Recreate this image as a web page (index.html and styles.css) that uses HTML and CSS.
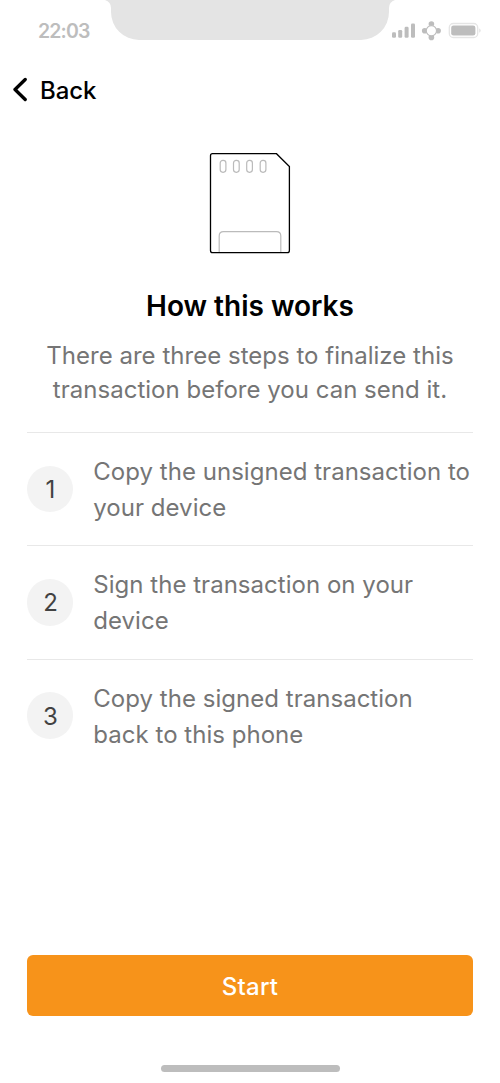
FILE: index.html
```html
<!DOCTYPE html>
<html lang="en">
<head>
<meta charset="utf-8">
<title>How this works</title>
<link rel="stylesheet" href="styles.css">
</head>
<body>
<div class="screen">
  <header class="status">
    <span class="time">22:03</span>
    <svg class="notch" width="290" height="41" viewBox="0 0 290 41"><path d="M0 0H290Q284 2 284 8V12A28 28 0 0 1 256 40H34A28 28 0 0 1 6 12V8Q6 2 0 0Z" fill="#e4e4e4"/></svg>
    <svg class="indicators" width="95" height="22" viewBox="0 0 95 22">
      <g fill="#bdbdbd"><rect x="2" y="12.300" width="4" height="5.500" rx="1.300"/><rect x="8.200" y="10" width="4" height="7.800" rx="1.300"/><rect x="14.600" y="6.800" width="4" height="11" rx="1.300"/><rect x="21" y="3.400" width="4" height="14.400" rx="1.300"/></g>
      <g fill="#bdbdbd"><circle cx="41.400" cy="4" r="2.800"/><circle cx="48.100" cy="10.700" r="2.800"/><circle cx="41.400" cy="17.400" r="2.800"/><circle cx="34.700" cy="10.700" r="2.800"/></g>
      <circle cx="41.400" cy="10.700" r="5.100" fill="#fff" stroke="#bdbdbd" stroke-width="1.100"/>
      <rect x="59.300" y="3.500" width="28.400" height="14" rx="4" fill="none" stroke="#e5e5e5" stroke-width="1.300"/><rect x="61.200" y="5.500" width="24.200" height="10" rx="2.300" fill="#bdbdbd"/><path d="M89.300 8.200Q92 10.500 89.300 12.800Z" fill="#dedede"/>
    </svg>
  </header>
  <nav class="nav"><svg width="16" height="26" viewBox="0 0 16 26"><path d="M14.200 2.500L4 12.500L14.200 22.500" fill="none" stroke="#000" stroke-width="3.300" stroke-linecap="round" stroke-linejoin="round"/></svg><span class="back">Back</span></nav>
  <main class="content">
    <svg class="card" width="82" height="102" viewBox="0 0 82 102"><path d="M3.500 1.700H67.500L80.400 14.500V98.500Q80.400 100.700 78.200 100.700H3.700Q1.500 100.700 1.500 98.500V3.700Q1.500 1.700 3.500 1.700Z" fill="#fff" stroke="#000" stroke-width="1.300"/><g fill="none" stroke="#bbb" stroke-width="1.200"><rect x="11.200" y="8.300" width="5.700" height="12" rx="2.700"/><rect x="24.500" y="8.300" width="5.700" height="12" rx="2.700"/><rect x="37.700" y="8.300" width="5.700" height="12" rx="2.700"/><rect x="51.200" y="8.300" width="5.700" height="12" rx="2.700"/><path d="M10.200 100V84Q10.200 79.700 14.500 79.700H67.500Q71.800 79.700 71.800 84V100"/></g></svg>
    <h1 class="title">How this works</h1>
    <p class="intro">There are three steps to finalize this<br>transaction before you can send it.</p>
    <ol class="steps">
      <li class="step"><span class="number">1</span><span class="label">Copy the unsigned transaction to<br>your device</span></li>
      <li class="step"><span class="number">2</span><span class="label">Sign the transaction on your<br>device</span></li>
      <li class="step"><span class="number">3</span><span class="label">Copy the signed transaction<br>back to this phone</span></li>
    </ol>
  </main>
  <footer class="footer"><button class="start">Start</button><div class="home"></div></footer>
</div>
</body>
</html>
```

FILE: styles.css
```css
* { box-sizing: border-box; }
body { margin: 0; background: #fff; font-family: Inter, sans-serif; }
.screen { width: 500px; height: 1083px; display: flex; flex-direction: column; overflow: hidden; }
.status { height: 60px; display: flex; align-items: flex-start; }
.time { width: 105px; padding: 19px 0 0 38px; font-size: 19.500px; line-height: 24px; font-weight: 600; letter-spacing: -0.850px; color: #bdbdbd; }
.notch { flex: none; }
.indicators { margin: 20px 0 0 -5px; flex: none; }
.nav { height: 60px; padding-left: 11px; display: flex; align-items: center; gap: 13px; }
.back { padding-top: 1px; font-size: 24px; line-height: 31px; font-weight: 500; letter-spacing: -0.100px; }
.content { padding: 32px 27px 0; display: flex; flex-direction: column; align-items: center; flex: 1; }
.title { margin: 35px 0 0; font-size: 28px; line-height: 34px; font-weight: 600; white-space: nowrap; }
.intro { margin: 16px 0 0; font-size: 24px; line-height: 33.500px; letter-spacing: 0.020px; color: #757575; text-align: center; white-space: nowrap; }
.steps { list-style: none; margin: 26px 0 0; padding: 0; width: 446.600px; }
.step { height: 113.300px; border-top: 1px solid #e8e8e8; display: flex; align-items: center; gap: 20px; }
.number { width: 46.600px; height: 46.600px; padding: 1px 0 0 1px; border-radius: 50%; background: #f3f3f3; color: #424242; display: flex; align-items: center; justify-content: center; font-size: 24px; flex: none; }
.label { padding-top: 2px; font-size: 24px; line-height: 36px; color: #757575; letter-spacing: 0.030px; white-space: nowrap; }
.footer { padding: 0 26.700px; display: flex; flex-direction: column; align-items: center; height: 128.500px; }
.start { width: 446.600px; height: 61.500px; padding: 3px 0 0; border: 0; border-radius: 6px; background: #f7931a; color: #fff; font: 500 24px/30px Inter, sans-serif; letter-spacing: 0.200px; flex: none; }
.home { margin-top: 49px; width: 179px; height: 7px; border-radius: 4px; background: #bdbdbd; }
```
